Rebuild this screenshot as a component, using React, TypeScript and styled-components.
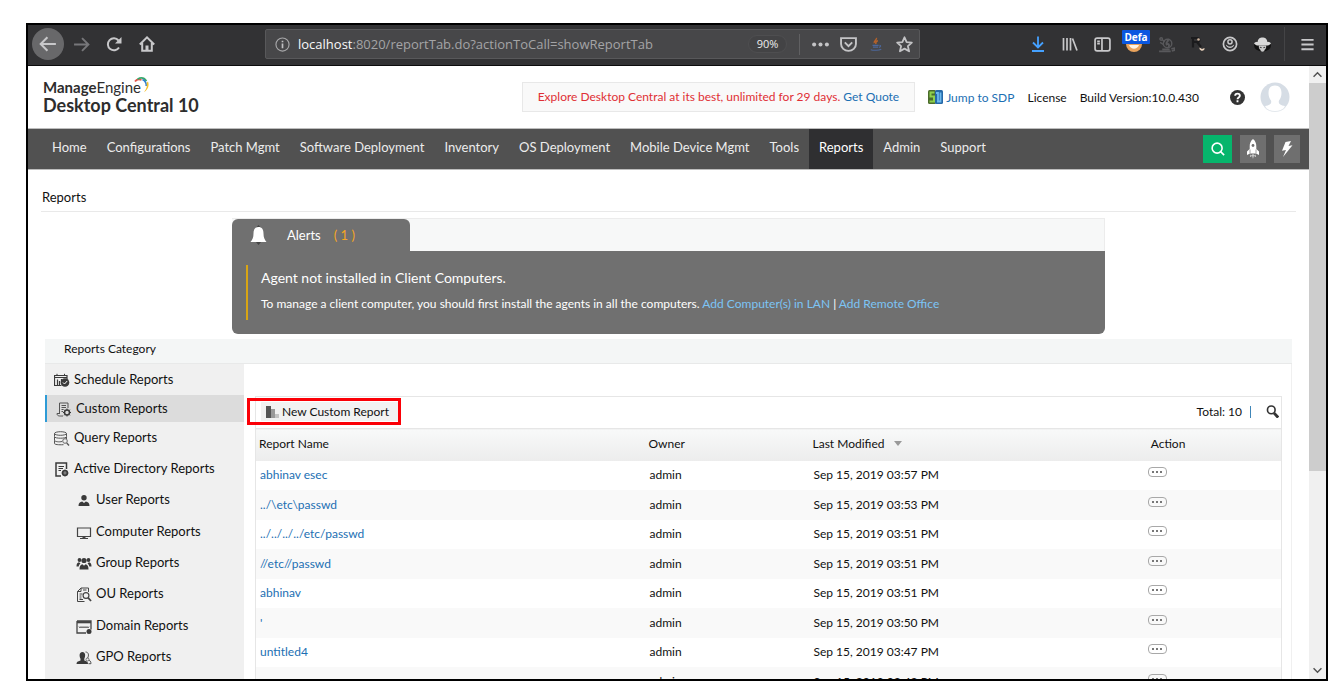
import React from 'react';
import styled, { createGlobalStyle, css } from 'styled-components';

const GlobalStyle = createGlobalStyle`
  * { box-sizing: border-box; }
  body { margin: 0; background: #fff; color: #111; font-family: Lato, "Liberation Sans", sans-serif; font-size: 13px; }
  button { font: inherit; color: inherit; border: 0; padding: 0; background: none; cursor: pointer; }
  a { color: #1c6fb3; text-decoration: none; }
  ul { margin: 0; padding: 0; list-style: none; }
  h1, h2, p { margin: 0; font-weight: 400; }
  svg { display: block; flex: none; }
`;

/* ---------- window frame ---------- */

const Desktop = styled.div`
  height: 100vh;
  padding: 23px 13px 19px 26px;
`;

const BrowserWindow = styled.div`
  height: 100%;
  display: flex;
  flex-direction: column;
  border: 2px solid #000;
  overflow: hidden;
`;

const BrowserBar = styled.div`
  display: flex;
  align-items: center;
  flex: none;
  height: 41px;
  padding: 0 3px 2px 4px;
  background: #323234;
  border-bottom: 1px solid #0c0c0d;
  color: #c8c8ca;
`;

const BrowserGroup = styled.div`
  display: flex;
  align-items: center;
`;

const BarButton = styled.button<{ $round?: boolean; $dim?: boolean }>`
  position: relative;
  display: flex;
  align-items: center;
  justify-content: center;
  width: 32px;
  height: 32px;
  border-radius: 50%;
  color: ${(p) => (p.$dim ? '#77777a' : '#c8c8ca')};
  background: ${(p) => (p.$round ? '#68686a' : 'transparent')};
`;

const NavGroup = styled(BrowserGroup)`
  flex: 0 0 233px;
  gap: 1px;
`;

const AddressBar = styled.div`
  display: flex;
  align-items: center;
  flex: 1 1 655px;
  max-width: 655px;
  height: 30px;
  padding: 0 1px 0 9px;
  border: 1px solid #58585a;
  border-radius: 2px;
  background: #474749;
`;

const AddressText = styled.div`
  flex: 1;
  margin-left: 8px;
  overflow: hidden;
  white-space: nowrap;
  outline: none;
  font: 13px/20px "Open Sans", "Noto Sans", sans-serif;
  color: #a4a4a6;
`;

const Host = styled.span`
  color: #f9f9fa;
`;

const ZoomLevel = styled.button`
  width: 39px;
  height: 18px;
  border-radius: 9px;
  border: 1px solid #4e4e50;
  background: #434345;
  color: #ededee;
  font: 11px/16px "Open Sans", sans-serif;
`;

const Divider = styled.span<{ $tall?: boolean }>`
  width: 1px;
  height: ${(p) => (p.$tall ? 34 : 21)}px;
  margin: 0 6px;
  background: ${(p) => (p.$tall ? '#444446' : '#606062')};
`;

const AddressButton = styled.button`
  display: flex;
  justify-content: center;
  width: 28px;
  color: #c4c4c6;
`;

const PageTools = styled(BrowserGroup)`
  margin-left: 6px;
`;

const Extensions = styled(BrowserGroup)`
  flex: none;
  margin-left: auto;
`;

const ContainerBadge = styled.span`
  position: absolute;
  top: 2px;
  left: 4px;
  width: 28px;
  height: 14px;
  border-radius: 1px;
  background: #0a57e0;
  color: #fff;
  font: bold 10px/14px "Open Sans", sans-serif;
  text-align: center;
`;

/* ---------- page ---------- */

const Viewport = styled.div`
  display: flex;
  flex: 1;
  min-height: 0;
`;

const Page = styled.div`
  flex: 1;
  min-width: 0;
  overflow: hidden;
  background: #fff;
`;

const Scrollbar = styled.div`
  display: flex;
  flex-direction: column;
  flex: none;
  width: 17px;
  background: #f0f0f0;
`;

const ScrollButton = styled.button`
  display: flex;
  align-items: center;
  justify-content: center;
  height: 17px;
  color: #505050;
`;

const ScrollTrack = styled.div`
  flex: 1;
`;

const ScrollThumb = styled.div`
  height: 67%;
  background: #cdcdcd;
`;

const Header = styled.header`
  display: flex;
  align-items: center;
  height: 63px;
  padding: 0 19px 0 15px;
  border-bottom: 1px solid #bdbdbd;
`;

const Brand = styled.a`
  display: block;
  padding-bottom: 2px;
  color: #2d2d2d;
`;

const BrandTop = styled.span`
  display: flex;
  font-size: 15px;
  line-height: 18px;
`;

const BrandBottom = styled.span`
  display: block;
  font-size: 18px;
  font-weight: 700;
  line-height: 18px;
`;

const BrandArc = styled.svg`
  margin: -1px 0 0 -7px;
`;

const HeaderTools = styled.div`
  display: flex;
  align-items: center;
  margin-left: auto;
  font-size: 12px;
  white-space: nowrap;
`;

const Banner = styled.p`
  height: 30px;
  margin-right: 13px;
  padding: 0 15px;
  border: 1px solid #e8e8e8;
  background: #f9f9f9;
  color: #e02f35;
  line-height: 27px;
`;

const SdpLink = styled.a`
  display: flex;
  align-items: center;
  gap: 3px;
`;

const HeaderItem = styled.span`
  margin-left: 13px;
`;

const HelpButton = styled.button`
  margin-left: 31px;
`;

const Avatar = styled.button`
  margin-left: 15px;
`;

const MainNav = styled.nav`
  display: flex;
  height: 41px;
  padding: 0 9px 0 14px;
  border-bottom: 1px solid #bdbdbd;
  background: #515151;
`;

const NavLink = styled.a<{ $active?: boolean }>`
  padding: 0 10px;
  color: ${(p) => (p.$active ? '#fff' : '#ececec')};
  background: ${(p) => (p.$active ? '#2f2f31' : 'transparent')};
  font-size: 13px;
  line-height: 37px;
  white-space: nowrap;
`;

const NavTools = styled.div`
  display: flex;
  align-items: center;
  gap: 8px;
  margin-left: auto;
`;

const NavTool = styled.button<{ $primary?: boolean }>`
  display: flex;
  align-items: center;
  justify-content: center;
  width: ${(p) => (p.$primary ? 29 : 26)}px;
  height: 28px;
  background: ${(p) => (p.$primary ? '#06b56c' : '#6f6f6f')};
`;

const Content = styled.main`
  padding: 0 13px;
`;

const PageTitle = styled.h1`
  height: 42px;
  padding-left: 1px;
  border-bottom: 1px solid #e9e9e9;
  font-size: 13px;
  line-height: 55px;
`;

const AlertBox = styled.section`
  width: 70%;
  max-width: 873px;
  margin: 6px 0 5px 191px;
  color: #fff;
`;

const AlertTabs = styled.div`
  display: flex;
  height: 33px;
  background: #f7f8f8;
  border: solid #ececec;
  border-width: 1px 1px 0 0;
`;

const AlertTab = styled.button`
  display: flex;
  align-items: center;
  width: 178px;
  padding-left: 18px;
  border-radius: 6px 6px 0 0;
  background: #707070;
  color: #fff;
  font-size: 13px;
`;

const AlertLabel = styled.span`
  margin: 0 13px 0 20px;
`;

const AlertCount = styled.span`
  color: #f5a623;
`;

const AlertBody = styled.div`
  height: 83px;
  padding: 14px;
  border-radius: 0 0 6px 6px;
  background: #707070;
`;

const AlertMessage = styled.div`
  height: 55px;
  padding-left: 13px;
  border-left: 2px solid #d9a514;
  font-size: 12px;
  line-height: 25px;
  a { color: #7cc4f5; }
`;

const AlertTitle = styled.h2`
  font-size: 14px;
  line-height: 26px;
`;

const CategoryBar = styled.h2`
  height: 25px;
  margin: 0 4px;
  padding-left: 19px;
  border-bottom: 1px solid #e8e9e9;
  background: #f4f6f6;
  font-size: 12px;
  line-height: 20px;
`;

const Columns = styled.div`
  display: flex;
  margin: 0 4px;
  border-right: 1px solid #f0f0f0;
`;

const Sidebar = styled.aside`
  flex: 0 0 199px;
  padding-bottom: 40px;
  background: #f0f0f0;
`;

const SideLink = styled.a<{ $h: number; $active?: boolean; $nested?: boolean }>`
  display: flex;
  align-items: center;
  gap: 4px;
  height: ${(p) => p.$h}px;
  padding-left: ${(p) => (p.$nested ? 31 : 9)}px;
  color: #111;
  font-size: 13px;
  svg { margin-top: 3px; }
  ${(p) =>
    p.$active &&
    css`
      border-left: 2px solid #2e9bd6;
      background: #dcdcdc;
    `}
`;

const SideLabel = styled.span`
  padding-bottom: 1px;
`;

const Reports = styled.section`
  flex: 1;
  min-width: 0;
  padding: 32px 9px 0 11px;
`;

const Grid = styled.div`
  border: 1px solid #e6e6e6;
  border-bottom: 0;
`;

const GridBar = styled.div`
  display: flex;
  align-items: center;
  justify-content: space-between;
  height: 31px;
  padding: 0 2px 2px 5px;
`;

const NewReport = styled.button`
  position: relative;
  display: flex;
  align-items: center;
  gap: 3px;
  height: 19px;
  padding: 0 9px 0 5px;
  background: #f2f2f2;
  font-size: 12px;
`;

const Highlight = styled.span`
  position: absolute;
  inset: -4px -3px -4px -14px;
  border: 3px solid #fb0007;
  pointer-events: none;
`;

const GridStatus = styled.div`
  display: flex;
  align-items: center;
  font-size: 12px;
`;

const StatusBar = styled.span`
  width: 1px;
  height: 12px;
  margin: 0 15px 0 8px;
  background: #3f86b8;
`;

const Table = styled.table`
  width: 100%;
  table-layout: fixed;
  border-collapse: collapse;
  font-size: 12px;
  th {
    height: 32px;
    padding: 0 0 2px 3px;
    border-top: 1px solid #e6e6e6;
    background: linear-gradient(#f8f9f9, #ececec);
    font-weight: 400;
    text-align: left;
  }
  td {
    height: 29px;
    padding: 0 0 1px 4px;
  }
  td:last-child {
    padding: 0;
  }
  tbody tr:nth-child(even) td {
    height: 30px;
    background: #f9f9f9;
  }
`;

const Col = styled.col<{ $w: string }>`
  width: ${(p) => p.$w};
`;

const SortButton = styled.button`
  display: flex;
  align-items: center;
  gap: 10px;
`;

const MoreButton = styled.button`
  display: flex;
  align-items: center;
  justify-content: center;
  gap: 2px;
  width: 19px;
  height: 10px;
  margin-bottom: 6px;
  border: 1px solid #a8a8a8;
  border-radius: 4px;
  i { width: 2px; height: 2px; background: #777; }
`;

/* ---------- icons ---------- */

type IconProps = { w?: number; h?: number; box?: string; fill?: string; sw?: number; children: React.ReactNode };

const Icon = ({ w = 16, h = w, box = '0 0 16 16', fill = 'none', sw = 1.5, children }: IconProps) => (
  <svg width={w} height={h} viewBox={box} fill={fill} stroke={fill === 'none' ? 'currentColor' : 'none'} strokeWidth={sw} aria-hidden="true">
    {children}
  </svg>
);

const Dark = '#3a3a3a';

const sideIcons: Record<string, React.ReactNode> = {
  schedule: (
    <>
      <path d="M.5 2.500h12.500v4M.5 2v10.500h7M1 4.500h12M3.500 6.500v6M5.500 8v4.500M7.500 6v3" stroke={Dark} strokeWidth="1.200" />
      <path d="M3 .8v2M10.500 .8v2" stroke={Dark} />
      <circle cx="11" cy="9.500" r="4.300" fill={Dark} stroke="none" />
      <path d="M9 9.500l1.500 1.500 2.700-3" stroke="#fff" />
    </>
  ),
  custom: (
    <>
      <path d="M3.500 1h8.500v5M3.500 1v11M3.500 11.500H1c0 3 3 2.500 6 2.500M5.500 3.500h4.500M5.500 5.500h4.500M5.500 7.500h2M5.500 9.500h1.500" stroke="#555" />
      <circle cx="11" cy="10.500" r="2.500" stroke={Dark} strokeWidth="1.500" />
      <path d="M11 6.500v1.500M11 13v1.500M7 10.500h1.500M13.500 10.500H15M8.200 7.700l1 1M12.800 12.300l1 1M13.800 7.700l-1 1M9.200 12.300l-1 1" stroke={Dark} />
    </>
  ),
  query: (
    <>
      <ellipse cx="6.500" cy="2.500" rx="6" ry="1.800" stroke="#555" />
      <path d="M.5 2.500v3.200c0 2 12 2 12 0V2.500M.5 6v3.200c0 1.600 5 2 7.500 1.300M12.500 6v2M.5 9.500v3c0 1 4 1.500 9 1.200" stroke="#555" />
      <circle cx="11" cy="10" r="2.300" stroke="#666" />
      <path d="M12.700 12l2.300 2.500" stroke="#555" strokeWidth="1.300" />
    </>
  ),
  directory: (
    <>
      <path d="M12.500 7V1H2v13h5" stroke={Dark} strokeWidth="1.500" />
      <path d="M4.500 4.500h5.500M4.500 6.500h4.500M4.500 8.500h2.500" stroke={Dark} strokeWidth="1.200" />
      <circle cx="11" cy="11" r="2.300" stroke={Dark} strokeWidth="1.800" />
      <path d="M11 7.500v7M7.500 11h7" stroke={Dark} strokeWidth=".8" />
    </>
  ),
  user: (
    <>
      <circle cx="8" cy="4.800" r="2.700" fill={Dark} stroke="none" />
      <path d="M2.500 13c0-3 1.500-4.200 3.700-4.500L8 10l1.800-1.500c2.200.3 3.700 1.500 3.700 4.500z" fill={Dark} stroke="none" />
    </>
  ),
  computer: (
    <>
      <path d="M1.500 3h13v8.500h-13z" stroke="#444" strokeWidth="1.200" />
      <path d="M6.500 11.500h3V13H12v1H4v-1h2.500z" fill="#444" stroke="none" />
    </>
  ),
  group: (
    <g fill={Dark} stroke="none">
      <circle cx="8" cy="4.500" r="2.600" />
      <circle cx="3.500" cy="4" r="1.900" />
      <circle cx="12.500" cy="4" r="1.900" />
      <path d="M3.500 13.500c0-3.500 1-4.800 3-5.300L8 9.700l1.500-1.500c2 .5 3 1.800 3 5.300zM.5 10.500c0-3 .7-4 2.500-4.300L4.500 7.500C3.200 8.300 2.900 9.500 2.700 10.500zM15.500 10.500c0-3-.7-4-2.500-4.300l-1.500 1.300c1.300.8 1.600 2 1.800 3z" />
    </g>
  ),
  ou: (
    <>
      <path d="M5 1h7.500v4M5 1v3.500H1.500V14.500h7M5 1L1.500 4.500M7 3h3.500M3.500 7h3M3.500 9h2M3.500 11h2M3.500 12.500h3.500" stroke="#444" />
      <circle cx="10" cy="8.500" r="2.900" stroke="#444" strokeWidth="1.200" />
      <path d="M12 10.700l3 3.300" stroke="#444" strokeWidth="1.800" />
    </>
  ),
  domain: (
    <>
      <path d="M1 2h14v8.500M1 2v12h9" stroke="#444" strokeWidth="1.300" />
      <path d="M1 3.200h14" stroke="#444" strokeWidth="2.200" />
      <path d="M3 7.500l1 1.500 1-1.500 1 1.500 1-1.500L8 9l1-1.500L10 9l1-1.500L12 9l1-1.500" stroke="#555" strokeWidth=".9" />
      <circle cx="13" cy="12.500" r="2.500" fill={Dark} stroke="none" />
    </>
  ),
  gpo: (
    <>
      <path d="M.5 14c0-2.200 1-2.500 4-3.500V8.700C3 6 3.200 2 6.400 2s3.400 4 1.900 6.700v1.800c3 1 3.700 1.300 3.700 3.500z" fill={Dark} stroke="none" />
      <path d="M9.500 2c3.200 0 3.700 3.500 2 6.200v1.500c2.500.8 3.500 1.500 3.500 4H12.500" stroke="#555" />
      <circle cx="11.500" cy="9.500" r="1.500" fill="#f0f0f0" stroke="#555" strokeWidth=".8" />
    </>
  ),
};

/* ---------- data ---------- */

const navItems = ['Home', 'Configurations', 'Patch Mgmt', 'Software Deployment', 'Inventory', 'OS Deployment', 'Mobile Device Mgmt', 'Tools', 'Reports', 'Admin', 'Support'];

const sideItems = [
  { label: 'Schedule Reports', icon: 'schedule', h: 31 },
  { label: 'Custom Reports', icon: 'custom', h: 27, active: true },
  { label: 'Query Reports', icon: 'query', h: 31 },
  { label: 'Active Directory Reports', icon: 'directory', h: 31 },
  { label: 'User Reports', icon: 'user', h: 31, nested: true },
  { label: 'Computer Reports', icon: 'computer', h: 32, nested: true },
  { label: 'Group Reports', icon: 'group', h: 31, nested: true },
  { label: 'OU Reports', icon: 'ou', h: 31, nested: true },
  { label: 'Domain Reports', icon: 'domain', h: 32, nested: true },
  { label: 'GPO Reports', icon: 'gpo', h: 31, nested: true },
];

const rows = [
  ['abhinav esec', 'Sep 15, 2019 03:57 PM'],
  ['../\\etc\\passwd', 'Sep 15, 2019 03:53 PM'],
  ['../../../../etc/passwd', 'Sep 15, 2019 03:51 PM'],
  ['//etc//passwd', 'Sep 15, 2019 03:51 PM'],
  ['abhinav', 'Sep 15, 2019 03:51 PM'],
  ["'", 'Sep 15, 2019 03:50 PM'],
  ['untitled4', 'Sep 15, 2019 03:47 PM'],
  ['', 'Sep 15, 2019 03:43 PM'],
];

/* ---------- sections ---------- */

const BrowserToolbar = () => (
  <BrowserBar>
    <NavGroup>
      <BarButton $round aria-label="Back">
        <Icon w={18} sw={1.8}><path d="M15 8H1.500M7.500 2L1.500 8l6 6" /></Icon>
      </BarButton>
      <BarButton $dim aria-label="Forward">
        <Icon w={17} sw={1.8}><path d="M1 8h13.500M8.500 2l6 6-6 6" /></Icon>
      </BarButton>
      <BarButton aria-label="Reload">
        <Icon sw={2}>
          <path d="M13 11.500a6 6 0 1 1-.5-7" />
          <path d="M15.500 1v6.500H9z" fill="currentColor" stroke="none" />
        </Icon>
      </BarButton>
      <BarButton aria-label="Home">
        <Icon sw={2}>
          <path d="M.8 8.500L8 1.400l7.200 7.100M3.200 7v7.800h9.600V7" />
          <path d="M8 14.500V9.500" strokeWidth="3" />
        </Icon>
      </BarButton>
    </NavGroup>
    <AddressBar>
      <Icon w={15} sw={1.2}>
        <circle cx="8" cy="8" r="7" stroke="#a8a8aa" />
        <path d="M8 7v5M8 4v1.600" stroke="#c0c0c2" strokeWidth="1.800" />
      </Icon>
      <AddressText role="textbox" aria-label="Address" contentEditable suppressContentEditableWarning spellCheck={false}>
        <Host>localhost</Host>:8020/reportTab.do?actionToCall=showReportTab
      </AddressText>
      <ZoomLevel>90%</ZoomLevel>
      <PageTools>
        <Divider />
        <AddressButton aria-label="Page actions">
          <Icon w={17} fill="#c4c4c6"><circle cx="2" cy="8" r="1.900" /><circle cx="8" cy="8" r="1.900" /><circle cx="14" cy="8" r="1.900" /></Icon>
        </AddressButton>
        <AddressButton aria-label="Save to Pocket">
          <Icon w={17} sw={1.800}><path d="M1 2h14v5.500a7 6.500 0 0 1-14 0zM4.500 6L8 9.500 11.500 6" /></Icon>
        </AddressButton>
        <AddressButton aria-label="Java">
          <Icon w={14}>
            <path d="M8.500 1c1 2-3.500 3.500-2.500 6M10 4C8 5 7 6 8 8" stroke="#b5622a" strokeWidth="1.600" />
            <path d="M4 9.500h7M4.500 11.500h6M2 14.500c3 1 9 1 12-.5M12 9.500c2 0 1.500 2-.5 2.300" stroke="#4c679b" strokeWidth="1.300" />
          </Icon>
        </AddressButton>
        <AddressButton aria-label="Bookmark">
          <Icon w={17} sw={1.700}><path d="M8 1.200l2 4.500 4.900.5-3.700 3.300 1.100 4.900L8 11.900l-4.300 2.500 1.100-4.900L1.100 6.200 6 5.700z" strokeLinejoin="round" /></Icon>
        </AddressButton>
      </PageTools>
    </AddressBar>
    <Extensions>
      <BarButton aria-label="Downloads">
        <Icon sw={1.800}><path d="M8 .5v11M3 6.500l5 5 5-5M2 15h12" stroke="#45a1ff" /></Icon>
      </BarButton>
      <BarButton aria-label="Library">
        <Icon sw={1.700}><path d="M1.500 2v12.500M5 2v12.500M8.500 2v12.500M10.500 2.500L15 14.500" /></Icon>
      </BarButton>
      <BarButton aria-label="Sidebars">
        <Icon w={17} sw={1.600}><rect x="1" y="2" width="14" height="12" rx="2" /><path d="M7.500 2v12M3 5h2.500M3 7.200h2.500" /></Icon>
      </BarButton>
      <BarButton aria-label="Container">
        <Icon w={16} fill="#e9a35c"><circle cx="8" cy="8" r="8" /><path d="M3 9c2 5 8 5 10 0z" fill="#fff3e2" /></Icon>
        <ContainerBadge>Defa</ContainerBadge>
      </BarButton>
      <BarButton aria-label="Proxy extension">
        <Icon w={17} sw={1.300}>
          <g stroke="#58585b">
            <circle cx="9" cy="7" r="4" />
            <path d="M9 3c2 2-2.500 3-1 5 2-1 3 0 2 2.500" strokeWidth="1.800" />
            <circle cx="3" cy="2.800" r="1.200" />
            <path d="M4 3.500l2.500 2M2 6l3 2" />
            <path d="M1 14.500h11M4 12.500h7M12.500 12l3-.5v2l-2.500.5" strokeWidth="1.600" />
          </g>
        </Icon>
      </BarButton>
      <BarButton aria-label="Script extension">
        <Icon w={16}>
          <path d="M3 1.500v10M1 2h6c3 0 3 4 0 4H4M7 6l4 5" stroke="#1b1b1d" strokeWidth="2.200" />
          <circle cx="8.500" cy="3.500" r="1.300" fill="#cbb29c" stroke="none" />
          <path d="M9.500 11.500l2.500 1.500 2.500-1c.5 3-3.500 4-5 1z" fill="#e8d2bd" stroke="none" />
        </Icon>
      </BarButton>
      <BarButton aria-label="Account">
        <Icon w={16}>
          <circle cx="8" cy="8" r="6.600" strokeWidth="1.700" />
          <circle cx="8" cy="5.800" r="2.100" strokeWidth="1.500" />
          <path d="M3.800 8.500c.7 4.500 7.700 4.500 8.400 0-1.200.5-1.500 1-2 1.500-1.200.8-3.200.8-4.400 0-.5-.5-.8-1-2-1.500z" fill="currentColor" stroke="none" />
        </Icon>
      </BarButton>
      <BarButton aria-label="Identity extension">
        <Icon w={17} fill="#d8d8d8">
          <ellipse cx="8" cy="9" rx="8" ry="5.500" fill="#111" />
          <path d="M3.500 5.500c0-5.500 9-5.500 9 0 1 0 2.500 0 3.500 1.500-1.500 1.500-3 2-4 2H4C3 9 1.500 8.500 0 7c1-1.500 2.500-1.500 3.500-1.500z" />
          <path d="M4.500 9h7c0 3-.5 3.500-1.500 4 0 2.500-4 2.500-4 0-1-.5-1.500-1-1.500-4z" fill="#c9c9c9" />
          <path d="M5.500 10.500l1.700.6M10.500 10.500l-1.700.6" stroke="#444" strokeWidth="1" />
        </Icon>
      </BarButton>
      <Divider $tall />
      <BarButton aria-label="Menu">
        <Icon w={15} sw={2}><path d="M1.500 3h13M1.500 8h13M1.500 13h13" /></Icon>
      </BarButton>
    </Extensions>
  </BrowserBar>
);

const SiteHeader = () => (
  <Header>
    <Brand href="#home">
      <BrandTop>
        <strong>Manage</strong>Engine
        <BrandArc width="16" height="16" viewBox="0 0 16 16" fill="none" aria-hidden="true">
          <path d="M1 4.500C2.500 2.500 5 2 7.500 3" stroke="#e2574c" strokeWidth="1.800" />
          <path d="M3.500 2.200C7 .2 10.500 1.200 12.500 4" stroke="#3aa76d" strokeWidth="1.700" />
          <path d="M8.500 2.500c3 1.500 4 4 3.700 6.500" stroke="#2f7fd0" strokeWidth="1.500" />
          <path d="M14 4.500c1.500 4 0 8.500-4 10.500 2.500-3 3.500-6 2.500-9" fill="#f5c02c" />
        </BrandArc>
      </BrandTop>
      <BrandBottom>Desktop Central 10</BrandBottom>
    </Brand>
    <HeaderTools>
      <Banner>Explore Desktop Central at its best, unlimited for 29 days. <a href="#quote">Get Quote</a></Banner>
      <SdpLink href="#sdp">
        <svg width="15" height="14" viewBox="0 0 15 14" fill="none" aria-hidden="true">
          <rect width="8" height="14" rx="1.500" fill="#4b6b2c" />
          <rect x="7" width="8" height="14" rx="1.500" fill="#2568a8" />
          <path d="M6.500 2.500H2.500v4h3.500v5H1.500" stroke="#8ed04b" strokeWidth="2" />
          <path d="M8 3h2v8.500M12.500 2.500v9H9" stroke="#6db9ee" strokeWidth="1.800" />
        </svg>
        Jump to SDP
      </SdpLink>
      <HeaderItem>License</HeaderItem>
      <HeaderItem>Build Version:10.0.430</HeaderItem>
      <HelpButton aria-label="Help">
        <Icon w={15}>
          <circle cx="8" cy="8" r="8" fill="#333" stroke="none" />
          <path d="M5.500 6.200c0-3.200 5-3 5-.2 0 1.900-2.500 1.900-2.500 3.800M8 11v2" stroke="#fff" strokeWidth="2" />
        </Icon>
      </HelpButton>
      <Avatar aria-label="Account">
        <svg width="30" height="30" viewBox="0 0 30 30" aria-hidden="true">
          <circle cx="15" cy="15" r="14.500" fill="#d6dde5" />
          <path d="M15 3.500c-4.500 0-6.500 3-6.500 7.500 0 3 1 5.500 2.500 7.500 1 3-1 4.500-6 5.500 4 8 16 8 20 0-5-1-7-2.500-6-5.500 1.500-2 2.500-4.500 2.500-7.500C21.500 6.500 19.500 3.500 15 3.500z" fill="#fff" />
          <path d="M4.500 25c5 6 16 6 21 0" fill="none" stroke="#e3e8ed" />
        </svg>
      </Avatar>
    </HeaderTools>
  </Header>
);

const SiteNav = () => (
  <MainNav>
    {navItems.map((item) => (
      <NavLink key={item} href="#nav" $active={item === 'Reports'}>{item}</NavLink>
    ))}
    <NavTools>
      <NavTool $primary aria-label="Search">
        <Icon w={14} sw={1.800}><circle cx="7" cy="7" r="5.700" stroke="#fff" /><path d="M11 11l4 4" stroke="#fff" /></Icon>
      </NavTool>
      <NavTool aria-label="Getting started">
        <Icon w={14} h={20} box="0 0 14 20" fill="#fff">
          <path d="M7 0c2.500 2 3.300 4.500 3.300 7.500V10l2.700 2.500V16l-3-1.500H4L1 16v-3.500L3.700 10V7.500C3.700 4.500 4.500 2 7 0z" />
          <circle cx="7" cy="6.500" r="1.400" fill="#6f6f6f" />
          <path d="M4 10.500v4M10 10.500v4" stroke="#8a8a8a" strokeWidth=".8" />
          <path d="M4.800 15.500l-.8 2.500 1.800-1zM6.200 15.500h1.600L7 20zM9.200 15.500l.8 2.500-1.800-1z" />
        </Icon>
      </NavTool>
      <NavTool aria-label="Quick actions">
        <Icon w={12} h={16} box="0 0 12 16" fill="#fff"><path d="M4.500 1L10 0 7.500 5l4-.8L2 16l3-7-4 .8z" /></Icon>
      </NavTool>
    </NavTools>
  </MainNav>
);

const Alerts = () => (
  <AlertBox>
    <AlertTabs>
      <AlertTab>
        <svg width="17" height="20" viewBox="0 0 17 20" aria-hidden="true">
          <path d="M8.500 0L11 3H6zM6 17h5l-2.500 3z" fill="#444" />
          <path d="M8.500 2C5 2 3.500 4.500 3.500 8.500c0 4-1 6-3 8.500h16c-2-2.500-3-4.500-3-8.500C13.500 4.500 12 2 8.500 2z" fill="#fff" />
        </svg>
        <AlertLabel>Alerts</AlertLabel>
        <AlertCount>( 1 )</AlertCount>
      </AlertTab>
    </AlertTabs>
    <AlertBody>
      <AlertMessage>
        <AlertTitle>Agent not installed in Client Computers.</AlertTitle>
        <p>
          To manage a client computer, you should first install the agents in all the computers. <a href="#lan">Add Computer(s) in LAN</a> | <a href="#remote">Add Remote Office</a>
        </p>
      </AlertMessage>
    </AlertBody>
  </AlertBox>
);

const ReportGrid = () => (
  <Grid>
    <GridBar>
      <NewReport>
        <svg width="13" height="12" viewBox="0 0 13 12" aria-hidden="true">
          <path d="M0 0h5v12H0z" fill="#555" />
          <path d="M5 3h4v9H5z" fill="#999" />
          <path d="M9 8h4v4H9z" fill="#c4c4c4" />
        </svg>
        New Custom Report
        <Highlight />
      </NewReport>
      <GridStatus>
        Total: 10
        <StatusBar />
        <button aria-label="Search reports">
          <Icon w={13} sw={2}><circle cx="6.500" cy="6" r="4.700" stroke="#333" /><path d="M10 10l5 5.500" stroke="#333" strokeWidth="3.500" /></Icon>
        </button>
      </GridStatus>
    </GridBar>
    <Table>
      <colgroup>
        <Col $w="38%" />
        <Col $w="16%" />
        <Col $w="33%" />
        <Col $w="13%" />
      </colgroup>
      <thead>
        <tr>
          <th>Report Name</th>
          <th>Owner</th>
          <th>
            <SortButton>
              Last Modified
              <svg width="8" height="5" viewBox="0 0 8 5" aria-hidden="true"><path d="M0 0h8L4 5z" fill="#999" /></svg>
            </SortButton>
          </th>
          <th>Action</th>
        </tr>
      </thead>
      <tbody>
        {rows.map(([name, date]) => (
          <tr key={name}>
            <td><a href="#report">{name}</a></td>
            <td>admin</td>
            <td>{date}</td>
            <td>
              <MoreButton aria-label="Actions"><i /><i /><i /></MoreButton>
            </td>
          </tr>
        ))}
      </tbody>
    </Table>
  </Grid>
);

const App = () => (
  <Desktop>
    <GlobalStyle />
    <BrowserWindow>
      <BrowserToolbar />
      <Viewport>
        <Page>
          <SiteHeader />
          <SiteNav />
          <Content>
            <PageTitle>Reports</PageTitle>
            <Alerts />
            <CategoryBar>Reports Category</CategoryBar>
            <Columns>
              <Sidebar>
                <ul>
                  {sideItems.map((item) => (
                    <li key={item.label}>
                      <SideLink href="#category" $h={item.h} $active={item.active} $nested={item.nested}>
                        <Icon w={16} sw={1}>{sideIcons[item.icon]}</Icon>
                        <SideLabel>{item.label}</SideLabel>
                      </SideLink>
                    </li>
                  ))}
                </ul>
              </Sidebar>
              <Reports>
                <ReportGrid />
              </Reports>
            </Columns>
          </Content>
        </Page>
        <Scrollbar>
          <ScrollButton aria-label="Scroll up"><Icon w={9} sw={2.500}><path d="M1 12l7-7 7 7" /></Icon></ScrollButton>
          <ScrollTrack><ScrollThumb /></ScrollTrack>
          <ScrollButton aria-label="Scroll down"><Icon w={9} sw={2.500}><path d="M1 4l7 7 7-7" /></Icon></ScrollButton>
        </Scrollbar>
      </Viewport>
    </BrowserWindow>
  </Desktop>
);

export default App;
